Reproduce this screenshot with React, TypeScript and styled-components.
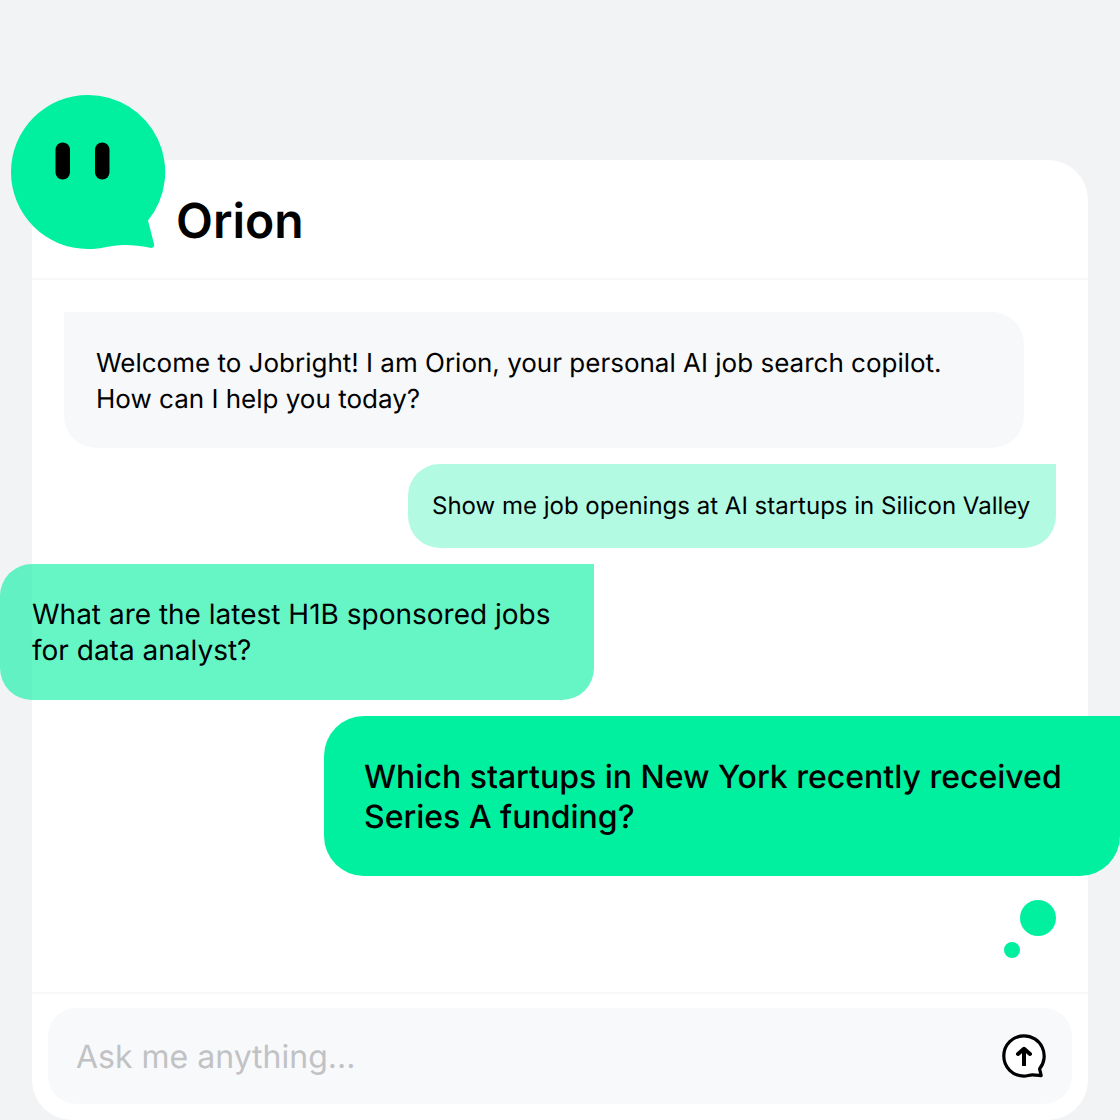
import React, { useState } from "react";
import styled, { createGlobalStyle, css } from "styled-components";

const GlobalStyle = createGlobalStyle`
  *, *::before, *::after { box-sizing: border-box; }
  body {
    margin: 0;
    background: #f2f3f5;
    color: #000;
    font-family: Inter, "Liberation Sans", sans-serif;
    text-rendering: geometricPrecision;
    overflow-x: hidden;
  }
`;

const green = "#00f0a0";

const Page = styled.main`
  display: flex;
  min-height: 100vh;
  padding: 160px 32px 0;
`;

const Card = styled.section`
  flex: 1;
  min-width: 0;
  display: flex;
  flex-direction: column;
  background: #fff;
  border-radius: 40px;
`;

const Header = styled.header`
  position: relative;
  display: flex;
  align-items: center;
  height: 120px;
  padding: 4px 0 0 144px;
  border-bottom: 2px solid #f7f8f9;
`;

const Avatar = styled.svg`
  position: absolute;
  left: -22px;
  top: -66px;
  width: 156px;
  height: 156px;
`;

const Title = styled.h1`
  margin: 0;
  font-size: 48px;
  line-height: 60px;
  font-weight: 600;
`;

const Messages = styled.div`
  flex: 1;
  display: flex;
  flex-direction: column;
  gap: 16px;
  padding: 32px;
`;

type Variant = "intro" | "pale" | "medium" | "strong";

const variants = {
  intro: css`
    margin-right: 32px;
    padding: 34px 32px 30px;
    border-radius: 0 32px 32px 32px;
    background: #f7f8fa;
    font-size: 26px;
    line-height: 36px;
  `,
  pale: css`
    align-self: flex-end;
    width: 648px;
    padding: 24px;
    border-radius: 32px 0 32px 32px;
    background: rgba(0, 240, 160, 0.3);
    font-size: 24px;
    line-height: 36px;
  `,
  medium: css`
    width: 594px;
    margin-left: -64px;
    padding: 32px;
    border-radius: 32px 0 32px 32px;
    background: rgba(0, 240, 160, 0.6);
    font-size: 28px;
    line-height: 36px;
  `,
  strong: css`
    align-self: flex-end;
    width: 796px;
    margin-right: -64px;
    padding: 41px 40px 39px;
    border-radius: 40px 0 40px 40px;
    background: ${green};
    font-size: 32px;
    line-height: 40px;
    font-weight: 500;
  `,
};

const Bubble = styled.p<{ $variant: Variant }>`
  margin: 0;
  ${({ $variant }) => variants[$variant]}
`;

const Thinking = styled.div`
  display: flex;
  align-self: flex-end;
  align-items: flex-end;
  height: 66px;
  padding-top: 8px;
`;

const Dot = styled.span<{ $size: number; $raised?: boolean }>`
  width: ${({ $size }) => $size}px;
  height: ${({ $size }) => $size}px;
  border-radius: 50%;
  background: ${green};
  align-self: ${({ $raised }) => ($raised ? "flex-start" : "flex-end")};
`;

const Footer = styled.footer`
  padding: 14px 16px 16px;
  border-top: 2px solid #f7f8f9;
`;

const Composer = styled.form`
  display: flex;
  align-items: center;
  height: 96px;
  padding: 0 24px 0 28px;
  border-radius: 28px;
  background: #f8f9fb;
`;

const Prompt = styled.input`
  flex: 1;
  min-width: 0;
  height: 48px;
  padding: 0;
  border: 0;
  outline: 0;
  background: transparent;
  color: #000;
  font: 400 32px/40px Inter, "Liberation Sans", sans-serif;
  text-rendering: inherit;

  &::placeholder {
    color: #c1c2c4;
    opacity: 1;
  }
`;

const Send = styled.button`
  display: flex;
  width: 48px;
  height: 48px;
  padding: 0;
  border: 0;
  background: transparent;
  cursor: pointer;
`;

const messages: { variant: Variant; text: string }[] = [
  {
    variant: "intro",
    text: "Welcome to Jobright! I am Orion, your personal AI job search copilot. How can I help you today?",
  },
  { variant: "pale", text: "Show me job openings at AI startups in Silicon Valley" },
  { variant: "medium", text: "What are the latest H1B sponsored jobs for data analyst?" },
  { variant: "strong", text: "Which startups in New York recently received Series A funding?" },
];

export default function App() {
  const [prompt, setPrompt] = useState("");

  return (
    <>
      <GlobalStyle />
      <Page>
        <Card>
          <Header>
            <Avatar viewBox="0 0 156 156" aria-hidden="true">
              <path
                fill={green}
                d="M78 1A77 77 0 1 0 78 155C85 155 90 154.300 98 152.700C112 150 124 150.500 140 153.800C142.900 154.300 144.700 152.500 144 150L138 126.500A77 77 0 0 0 78 1Z"
              />
              <rect x="45.500" y="48.500" width="14.500" height="37" rx="7.250" />
              <rect x="85" y="48.500" width="14.500" height="37" rx="7.250" />
            </Avatar>
            <Title>Orion</Title>
          </Header>
          <Messages>
            {messages.map((m) => (
              <Bubble key={m.variant} $variant={m.variant}>
                {m.text}
              </Bubble>
            ))}
            <Thinking aria-label="Orion is thinking">
              <Dot $size={16} />
              <Dot $size={36} $raised />
            </Thinking>
          </Messages>
          <Footer>
            <Composer onSubmit={(e) => e.preventDefault()}>
              <Prompt
                aria-label="Ask me anything"
                placeholder="Ask me anything..."
                value={prompt}
                onChange={(e) => setPrompt(e.target.value)}
              />
              <Send type="submit" aria-label="Send">
                <svg width="48" height="48" viewBox="0 0 48 48" fill="none" stroke="#000" strokeLinejoin="round">
                  <path
                    fill="#fff"
                    strokeWidth="3.200"
                    d="M24 3.800A20.200 20.200 0 1 0 24 44.200C27.500 44.200 29 42.800 32.500 42.800C36 42.800 38 43.200 41.200 43.600L39.600 36.800A20.200 20.200 0 0 0 24 3.800Z"
                  />
                  <path strokeWidth="4" d="M24 34V18" />
                  <path strokeWidth="4" strokeLinecap="round" d="M18 22L24 16.800L30 22" />
                </svg>
              </Send>
            </Composer>
          </Footer>
        </Card>
      </Page>
    </>
  );
}
